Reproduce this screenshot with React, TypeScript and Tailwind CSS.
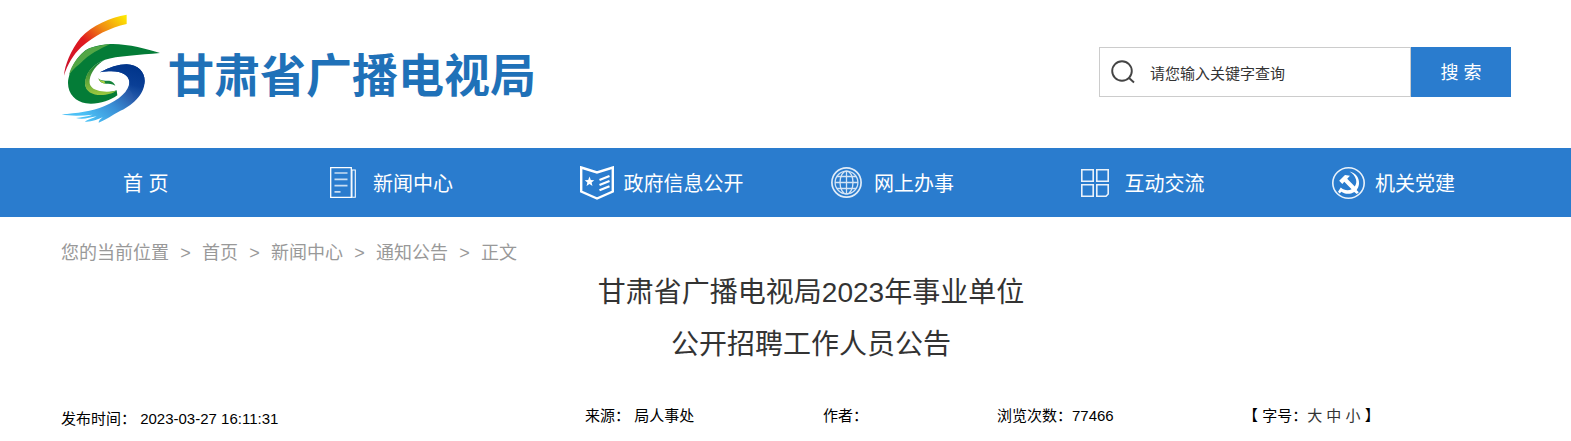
import type { ReactNode } from 'react';

interface NavItem {
  label: string;
  icon: ReactNode;
}

function Emblem() {
  return (
    <svg viewBox="33 40 300 333" className="w-[100px] h-[111px] shrink-0" aria-hidden="true">
      <defs>
        <linearGradient id="flame" x1="0" y1="1" x2="1" y2="0">
          <stop offset="0" stopColor="#c8102e" />
          <stop offset="0.45" stopColor="#e01a1f" />
          <stop offset="0.7" stopColor="#f08c14" />
          <stop offset="1" stopColor="#fff000" />
        </linearGradient>
        <linearGradient id="leaf" x1="0" y1="0" x2="0" y2="1">
          <stop offset="0" stopColor="#0a7a35" />
          <stop offset="0.6" stopColor="#5fa53a" />
          <stop offset="1" stopColor="#9cc93f" />
        </linearGradient>
        <linearGradient id="river" gradientUnits="userSpaceOnUse" x1="250" y1="220" x2="120" y2="360">
          <stop offset="0" stopColor="#003a8f" />
          <stop offset="0.3" stopColor="#2a5cab" />
          <stop offset="0.6" stopColor="#3a8fd6" />
          <stop offset="1" stopColor="#4cc0f5" />
        </linearGradient>
        <linearGradient id="ring" gradientUnits="userSpaceOnUse" x1="260" y1="200" x2="230" y2="310">
          <stop offset="0" stopColor="#00348a" />
          <stop offset="0.5" stopColor="#0a3f96" />
          <stop offset="1" stopColor="#2f66b4" stopOpacity="0.2" />
        </linearGradient>
      </defs>
      <path d="M42 228 C44 196 62 152 92 114 C127 77 180 53 230 45 L230 73 C180 84 132 108 94 142 C70 165 52 194 42 228Z" fill="url(#flame)" />
      <path d="M180 133 C230 131 290 148 330 160 C270 166 200 169 165 180 C125 194 106 224 106 252 C106 272 124 280 150 280 C170 280 188 276 200 272 L202 287 C180 303 140 316 108 311 C78 306 54 284 54 250 C56 214 84 160 118 146 C140 137 160 134 180 133Z" fill="#047c37" />
      <path d="M180 133 C150 137 130 142 118 146 C88 162 64 196 57 226 C72 204 84 198 92 190 C116 164 150 148 180 133Z" fill="#52a646" />
      <path d="M165 180 C125 194 104 224 105 252 C106 276 128 286 152 286 C172 286 190 280 199 273 C180 277 160 278 142 272 C124 266 117 256 119 240 C123 216 140 194 165 180Z" fill="url(#leaf)" />
      <path d="M145 236 C153 245 165 243 178 243 C188 245 194 252 196 258 C186 252 176 252 168 252 C156 252 148 246 145 236Z" fill="#15823a" />
      <path d="M145 236 C150 243 156 245 163 244 L166 252 C156 251 148 246 145 236Z" fill="#a9cf3f" />
      <path d="M150 218 C180 202 205 194 230 194 C264 196 284 216 284 244 C284 286 244 320 206 336 C188 346 170 358 146 369 C145 363 152 358 158 353 C142 360 122 368 104 366 C112 360 128 356 140 350 C118 355 96 360 78 355 C94 353 112 350 128 345 C96 349 60 350 35 344 C78 342 128 334 162 320 C208 300 238 274 238 246 C236 222 206 208 150 218Z" fill="url(#river)" />
      <path d="M150 218 C180 202 205 194 230 194 C264 196 284 216 284 244 C282 266 270 286 252 304 C250 290 246 276 238 270 C240 258 238 250 238 246 C236 222 206 208 150 218Z" fill="url(#ring)" />
    </svg>
  );
}

const NewsIcon = () => (
  <svg viewBox="0 0 26 31" className="w-[26px] h-[31px]" fill="none" stroke="#fff" aria-hidden="true">
    <path d="M.7.7H21.3V30.3H.7Z" strokeWidth="1.3" />
    <path d="M21.5 3H25.3V30.3H21" strokeWidth="1.1" />
    <path d="M22.5 3V30" strokeWidth="1" opacity=".5" />
    <path d="M4.5 6H17.5M4.5 12.3H17.5M4.5 18.6H17.5M4.5 24.8H10.5" strokeWidth="1.7" opacity=".75" />
  </svg>
);

const BookIcon = () => (
  <svg viewBox="0 0 34 34" className="w-[34px] h-[34px]" aria-hidden="true">
    <path d="M1.2 1.5L17 6.5L32.8 1.5V25.5L17 32.5L1.2 25.5Z" fill="none" stroke="#fff" strokeWidth="2.4" />
    <path d="M9.5 10.5L10.8 14L14.3 14.2L11.6 16.5L12.5 20L9.5 18L6.5 20L7.4 16.5L4.7 14.2L8.2 14Z" fill="#fff" />
    <path d="M19.5 14L29.5 10M19.5 19L29.5 15M19.5 24.2L29.5 20.2" stroke="#fff" strokeWidth="2.3" />
  </svg>
);

const GlobeIcon = () => (
  <svg viewBox="0 0 31 31" className="w-[31px] h-[31px]" fill="none" stroke="#fff" strokeWidth="1.3" aria-hidden="true">
    <circle cx="15.5" cy="15.5" r="14.6" strokeWidth="1.7" opacity=".85" />
    <g opacity=".8">
      <circle cx="15.5" cy="15.5" r="11.4" />
      <ellipse cx="15.5" cy="15.5" rx="6.5" ry="11.4" />
      <path d="M15.5 4V27M4 15.5H27M6 9.5H25M6 21.5H25" />
    </g>
  </svg>
);

const BlocksIcon = () => (
  <svg viewBox="0 0 28 28" className="w-[28px] h-[28px]" fill="none" stroke="#fff" strokeWidth="1.6" aria-hidden="true">
    <path d="M.8.8H12.2V12.2H.8ZM15.8.8H27.2V12.2H15.8ZM.8 15.8H12.2V27.2H.8ZM15.8 15.8H27.2V25L25 27.2H15.8Z" opacity=".9" />
  </svg>
);

const PartyIcon = () => (
  <svg viewBox="0 0 33 32" className="w-[33px] h-[32px]" aria-hidden="true">
    <ellipse cx="16.5" cy="16" rx="15.7" ry="15.2" fill="none" stroke="#fff" strokeWidth="1.6" opacity=".9" />
    <path d="M17.5 4.5C24 6 27.5 11 27 17C26.7 19.5 25.8 21.5 24.5 23L26.8 25.2L24.8 27L22.3 25C18 27.7 12.5 27.2 9.3 24.8L7.8 26.4L6 24.8L8.8 20.5C12 23.5 16.5 24 20 22C23.5 19.5 25 16.5 24 12.5C23 9 20.5 6.3 17.5 4.5Z" fill="#fff" />
    <path d="M7.2 13.8L13 8L18 8.7L15.2 11.8L25.2 22L22.3 25L12.3 14.8L10.3 17Z" fill="#fff" />
  </svg>
);

const SearchIcon = () => (
  <svg viewBox="0 0 24 24" className="w-6 h-6 shrink-0" fill="none" stroke="#444" strokeWidth="1.9" aria-hidden="true">
    <circle cx="11" cy="11" r="9.8" />
    <path d="M17.5 17.5L23 22.5" />
  </svg>
);

const navItems: NavItem[] = [
  { label: '新闻中心', icon: <NewsIcon /> },
  { label: '政府信息公开', icon: <BookIcon /> },
  { label: '网上办事', icon: <GlobeIcon /> },
  { label: '互动交流', icon: <BlocksIcon /> },
  { label: '机关党建', icon: <PartyIcon /> },
];

const crumbs = ['首页', '新闻中心', '通知公告'];

function Header() {
  return (
    <header className="flex items-center justify-between h-[148px] pl-[61px] pr-[60px]">
      <a href="#" className="flex items-center pb-3">
        <Emblem />
        <span className="ml-[7px] pt-4 text-[46px] leading-none font-bold text-[#1f71b8] whitespace-nowrap">
          甘肃省广播电视局
        </span>
      </a>
      <form className="flex h-[50px] mb-1" onSubmit={(e) => e.preventDefault()}>
        <label className="flex items-center w-[312px] pl-[11px] border border-[#ccc]">
          <SearchIcon />
          <input
            type="text"
            aria-label="请您输入关键字查询"
            placeholder="请您输入关键字查询"
            className="flex-1 min-w-0 ml-[15px] pt-1 text-[15px] text-[#333] placeholder:text-[#333] outline-none"
          />
        </label>
        <button type="submit" className="w-[100px] pt-0.5 bg-[#2a7cce] text-lg text-white">
          搜 索
        </button>
      </form>
    </header>
  );
}

function Nav() {
  return (
    <nav className="flex items-center h-[69px] pl-20 bg-[#2a7cce] text-xl text-white">
      <a href="#" className="w-[250px] shrink-0 pt-[3px] pl-[43px]">首 页</a>
      {navItems.map((item) => (
        <a key={item.label} href="#" className="flex items-center w-[16.8%] shrink-0 whitespace-nowrap">
          <span className="w-[43px] shrink-0">{item.icon}</span>
          <span className="pt-[3px]">{item.label}</span>
        </a>
      ))}
    </nav>
  );
}

export default function App() {
  return (
    <div className="overflow-hidden bg-white font-['Liberation_Sans','Noto_Sans_CJK_SC',sans-serif]">
      <Header />
      <Nav />
      <main className="pl-[61px] pr-[60px]">
        <div className="flex pt-5 text-lg leading-8 text-[#999]">
          <span>您的当前位置</span>
          {crumbs.map((crumb) => (
            <span key={crumb} className="flex">
              <span className="w-[33px] text-center">&gt;</span>
              <a href="#">{crumb}</a>
            </span>
          ))}
          <span className="w-[33px] text-center">&gt;</span>
          <span>正文</span>
        </div>

        <h1 className="-mt-0.5 pl-[50px] text-center text-[28px] leading-[52px] text-[#333]">
          甘肃省广播电视局2023年事业单位
          <br />
          公开招聘工作人员公告
        </h1>

        <div className="grid grid-cols-[524fr_238fr_174fr_246fr_268fr] pt-[33px] text-[15px] leading-6 text-black whitespace-nowrap">
          <p className="pt-[3px]">发布时间： 2023-03-27 16:11:31</p>
          <p>来源： 局人事处</p>
          <p>作者：</p>
          <p>浏览次数：77466</p>
          <p>
            【 字号：
            <button type="button" className="text-[#333]">大</button>{' '}
            <button type="button" className="text-[#333]">中</button>{' '}
            <button type="button" className="text-[#333]">小</button> 】
          </p>
        </div>
      </main>
    </div>
  );
}
